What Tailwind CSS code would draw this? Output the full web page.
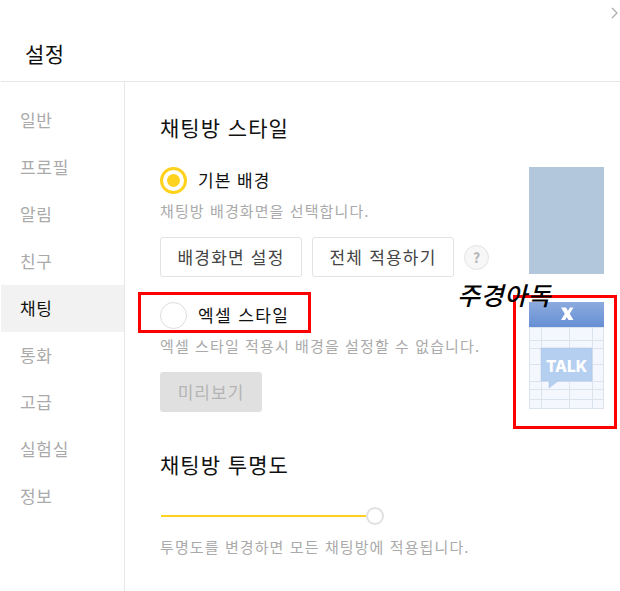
<!DOCTYPE html>
<html lang="ko">
<head>
    <meta charset="UTF-8">
    <title>설정</title>
    <script src="https://cdn.jsdelivr.net/npm/@tailwindcss/browser@4"></script>
</head>
<body class="bg-white font-['Noto_Sans_CJK_KR',sans-serif] w-[620px] h-[591px] overflow-hidden">
    <div class="relative w-[620px] h-[591px] overflow-hidden pl-px">
        <!-- close -->
        <svg class="absolute left-[610px] top-[6px]" width="10" height="14" viewBox="0 0 10 14" fill="none" stroke="#aaaaaa" stroke-width="1.2"><path d="M2 2l5 5-5 5"/></svg>

        <header class="h-[82px] border-b border-[#e6e6e6] pl-[24px] pt-[38px]">
            <h1 class="text-[21px] leading-[30px] tracking-[0.5px] text-[#111111]">설정</h1>
        </header>

        <div class="flex h-[509px]">
            <nav class="w-[124px] shrink-0 border-r border-[#e6e6e6] pt-[15px] text-[17px] tracking-[0.7px] text-[#aaaaaa]">
                <div class="h-[47px] flex items-center pl-[19px] pb-[2px]">일반</div>
                <div class="h-[47px] flex items-center pl-[19px] pb-[2px]">프로필</div>
                <div class="h-[47px] flex items-center pl-[19px] pb-[2px]">알림</div>
                <div class="h-[47px] flex items-center pl-[19px] pb-[2px]">친구</div>
                <div class="h-[47px] flex items-center pl-[19px] pb-[2px] bg-[#f2f2f2] text-[#111111]">채팅</div>
                <div class="h-[47px] flex items-center pl-[19px] pb-[2px]">통화</div>
                <div class="h-[47px] flex items-center pl-[19px] pb-[2px]">고급</div>
                <div class="h-[47px] flex items-center pl-[19px] pb-[2px]">실험실</div>
                <div class="h-[47px] flex items-center pl-[19px] pb-[2px]">정보</div>
            </nav>

            <main class="flex-1 pl-[35px] pr-[16px] pt-[30px]">
                <h2 class="text-[21px] leading-[30px] tracking-[1px] text-[#111111]">채팅방 스타일</h2>

                <section class="mt-[25px] flex justify-between">
                    <div>
                        <div class="flex items-center gap-[11px] h-[27px]">
                            <span class="w-[27px] h-[27px] rounded-full border-[3px] border-[#ffd21e] flex items-center justify-center">
                                <span class="w-[13px] h-[13px] rounded-full bg-[#ffd21e]"></span>
                            </span>
                            <span class="text-[17px] tracking-[1px] text-[#111111] pb-[2px]">기본 배경</span>
                        </div>
                        <p class="mt-[7px] h-[20px] leading-[20px] text-[15px] tracking-[1.1px] text-[#aaaaaa]">채팅방 배경화면을 선택합니다.</p>
                        <div class="mt-[16px] flex items-center gap-[10px]">
                            <button class="w-[142px] h-[40px] border border-[#e3e3e3] rounded-[3px] text-[17px] tracking-[1.2px] text-[#444444]">배경화면 설정</button>
                            <button class="w-[142px] h-[40px] border border-[#e3e3e3] rounded-[3px] text-[17px] tracking-[1.2px] text-[#444444]">전체 적용하기</button>
                            <span class="w-[25px] h-[25px] rounded-full border border-[#e3e3e3] bg-[#f7f7f7] flex items-center justify-center text-[14px] font-bold text-[#b5b5b5]">?</span>
                        </div>
                    </div>
                    <div class="w-[75px] h-[107px] bg-[#b2c7dc]"></div>
                </section>

                <section class="mt-[25px] flex justify-between">
                    <div>
                        <div class="flex items-center gap-[11px] h-[27px]">
                            <span class="w-[27px] h-[27px] rounded-full border border-[#dddddd] bg-white"></span>
                            <span class="text-[17px] tracking-[1.4px] text-[#111111] pb-[2px]">엑셀 스타일</span>
                        </div>
                        <p class="mt-[7px] h-[20px] leading-[20px] text-[15px] tracking-[1.1px] text-[#aaaaaa] whitespace-nowrap">엑셀 스타일 적용시 배경을 설정할 수 없습니다.</p>
                        <div class="mt-[16px]">
                            <button class="w-[102px] h-[40px] rounded-[3px] bg-[#e0e0e0] text-[17px] tracking-[1px] text-[#b4b4b4]">미리보기</button>
                        </div>
                    </div>
                    <svg class="shrink-0" width="75" height="107" viewBox="0 0 75 107">
                        <defs>
                            <linearGradient id="excelHead" x1="0" y1="0" x2="0" y2="1">
                                <stop offset="0" stop-color="#8cabdf"/>
                                <stop offset="1" stop-color="#668fd3"/>
                            </linearGradient>
                        </defs>
                        <rect width="75" height="107" fill="#f4f7fd"/>
                        <rect width="75" height="25" fill="url(#excelHead)"/>
                        <path d="M32 5.500H37L44.500 18H39.500zM38.500 9.500L41 5.500H44.500L40.500 12zM32 18L36 11.500L38 15L36 18z" fill="#ffffff"/>
                        <g stroke="#dbe3ef" stroke-width="1" fill="none">
                            <path d="M0 25.500H75M0 38.500H75M0 46.500H75M0 62.500H75M0 79.500H75M0 87.500H75M0 97.500H75"/>
                            <path d="M12.500 25V107M40.500 25V107M63.500 25V107"/>
                            <rect x="0.500" y="25.500" width="74" height="81"/>
                        </g>
                        <path d="M12 46H63V79H29L20 86V79H12z" fill="#b5cff0" stroke="#a9c3e4" stroke-width="0.500"/>
                        <text x="37.500" y="69.500" text-anchor="middle" font-family="Inter, sans-serif" font-weight="800" font-size="15.500" fill="#ffffff">TALK</text>
                    </svg>
                </section>

                <h2 class="mt-[37px] text-[21px] leading-[30px] tracking-[1px] text-[#111111]">채팅방 투명도</h2>

                <div class="mt-[28px] flex items-center h-[18px]">
                    <div class="ml-px w-[205px] h-[2px] bg-[#ffd21e]"></div>
                    <div class="w-[18px] h-[18px] rounded-full border-2 border-[#e0e0e0] bg-white"></div>
                </div>
                <p class="mt-[12px] h-[20px] leading-[20px] text-[15px] tracking-[1.1px] text-[#aaaaaa]">투명도를 변경하면 모든 채팅방에 적용됩니다.</p>
            </main>
        </div>

        <!-- annotations drawn over the screenshot -->
        <div class="absolute left-[138px] top-[292px] w-[173px] h-[41px] border-[3px] border-[#ff0000]"></div>
        <div class="absolute left-[513px] top-[295px] w-[104px] h-[134px] border-[3px] border-[#ff0000]"></div>
        <div class="absolute left-[457px] top-[276px] text-[25px] leading-[36px] tracking-[0.5px] font-medium italic text-black whitespace-nowrap">주경아독</div>
    </div>
</body>
</html>
